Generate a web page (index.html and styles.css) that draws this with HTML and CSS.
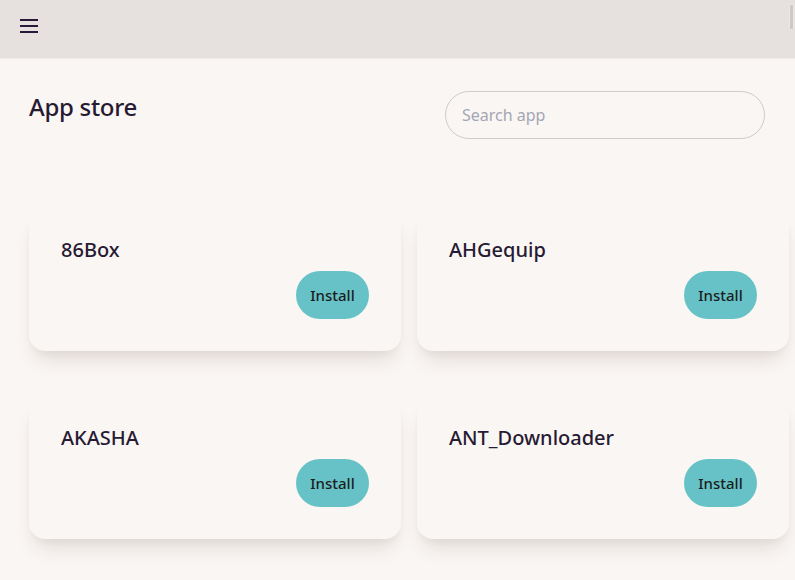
FILE: index.html
```html
<!DOCTYPE html>
<html lang="en">
<head>
<meta charset="utf-8">
<title>App store</title>
<link rel="stylesheet" href="styles.css">
</head>
<body>
<header class="topbar">
  <button class="menu-btn" aria-label="Menu">
    <svg width="18" height="14" viewBox="0 0 18 14"><rect x="0" y="0" width="18" height="2" fill="#2a1838"/><rect x="0" y="6" width="18" height="2" fill="#2a1838"/><rect x="0" y="12" width="18" height="2" fill="#2a1838"/></svg>
  </button>
</header>
<div class="scroll-thumb"></div>
<main class="content">
  <div class="title-row">
    <h1 class="page-title">App store</h1>
    <input class="search" type="text" placeholder="Search app">
  </div>
  <div class="grid">
    <div class="card"><h2 class="card-title">86Box</h2><div class="card-actions"><button class="install">Install</button></div></div>
    <div class="card"><h2 class="card-title">AHGequip</h2><div class="card-actions"><button class="install">Install</button></div></div>
    <div class="card"><h2 class="card-title">AKASHA</h2><div class="card-actions"><button class="install">Install</button></div></div>
    <div class="card"><h2 class="card-title">ANT_Downloader</h2><div class="card-actions"><button class="install">Install</button></div></div>
  </div>
</main>
</body>
</html>
```
FILE: styles.css
```css
html, body {
  margin: 0;
  padding: 0;
  height: 580px;
  overflow: hidden;
}
body {
  background: #faf6f3;
  font-family: "Noto Sans", "Open Sans", sans-serif;
  color: #271a33;
  position: relative;
}
.topbar {
  box-sizing: border-box;
  height: 59px;
  background: #e6e1de;
  border-bottom: 1px solid #efebe8;
  display: flex;
  align-items: flex-start;
  padding: 19px 0 0 20px;
}
.menu-btn {
  border: 0;
  background: none;
  padding: 0;
  width: 18px;
  height: 14px;
  display: flex;
}
.scroll-thumb {
  position: absolute;
  right: 1px;
  top: 4px;
  width: 3px;
  height: 24px;
  background: #cdc9c6;
  border: 1px solid #ebe7e4;
  border-radius: 1px;
}
.content {
  padding: 32px 6px 0 29px;
}
.title-row {
  display: flex;
  justify-content: space-between;
  align-items: flex-start;
  margin-right: 24px;
}
.page-title {
  margin: 0;
  font-size: 24px;
  line-height: 32px;
  font-weight: 500;
  letter-spacing: -0.3px;
}
.search {
  box-sizing: border-box;
  width: 320px;
  height: 48px;
  border: 1px solid #cfcacc;
  border-radius: 24px;
  background: #faf6f3;
  padding: 0 16px;
  font-family: inherit;
  font-size: 16px;
  color: #271a33;
  outline: none;
}
.search::placeholder {
  color: #a3a6b3;
}
.grid {
  margin-top: 72px;
  display: grid;
  grid-template-columns: 372px 372px;
  column-gap: 16px;
  row-gap: 48px;
}
.card {
  box-sizing: border-box;
  height: 140px;
  padding: 27px 32px 32px;
  border-radius: 16px;
  background: #faf6f3;
  box-shadow: 0 14px 20px -6px rgba(60, 40, 40, 0.13), 0 4px 8px -3px rgba(60, 40, 40, 0.06);
  display: flex;
  flex-direction: column;
}
.card-title {
  margin: 0;
  font-size: 20px;
  line-height: 24px;
  font-weight: 500;
}
.card-actions {
  margin-top: 9px;
  display: flex;
  justify-content: flex-end;
}
.install {
  height: 48px;
  width: 73px;
  border: 0;
  border-radius: 24px;
  background: #66c2c6;
  color: #1b1d20;
  font-family: inherit;
  font-size: 15px;
  font-weight: 500;
  padding: 0;
}
```
